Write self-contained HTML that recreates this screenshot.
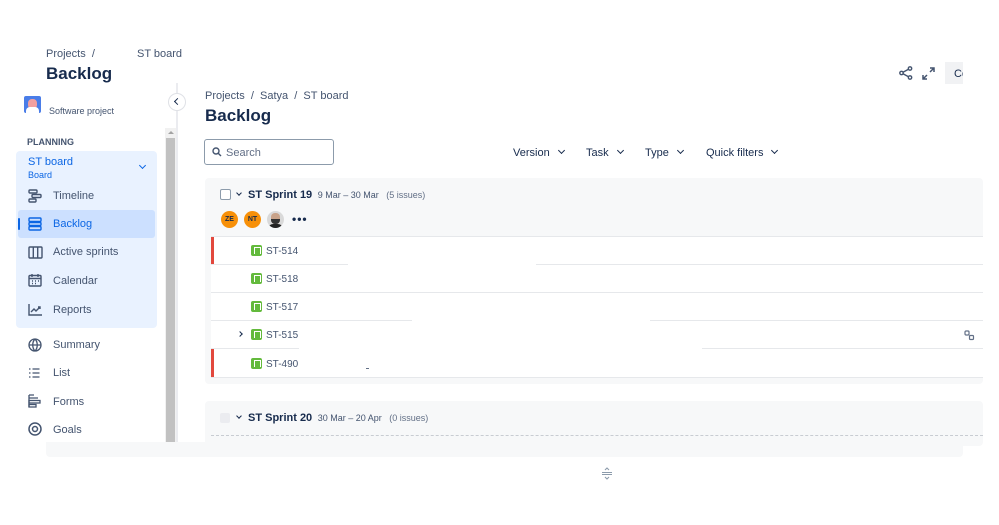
<!DOCTYPE html>
<html><head><meta charset="utf-8"><style>
*{margin:0;padding:0;box-sizing:border-box}
body{width:999px;height:525px;background:#fff;font-family:"Liberation Sans",sans-serif;color:#172b4d;position:relative;overflow:hidden}
.a{position:absolute}
.nav{position:absolute;left:53px;font-size:11px;color:#44546f}
.ic{position:absolute;left:28px}
.row{position:absolute;left:211px;width:772px;height:28px;background:#fff}
.key{position:absolute;left:40px;top:8px;font-size:10px;color:#44546f}
.key i{display:inline-block;width:11px;height:11px;background:#63ba3c;border-radius:2px;vertical-align:-2px;margin-right:4px;position:relative}
.key i:after{content:"";position:absolute;left:3px;top:2px;width:5px;height:6px;border:1.2px solid #fff;border-bottom:none}
.sep{position:absolute;height:1px;background:#e6e8eb}
.flt{position:absolute;top:147px;font-size:11px;color:#172b4d}
.flt:after{content:"";display:inline-block;width:4px;height:4px;border-right:1.5px solid #172b4d;border-bottom:1.5px solid #172b4d;transform:rotate(45deg);margin-left:9px;vertical-align:3px}
</style></head><body>
<div class="a" style="left:46px;top:48px;font-size:11px;color:#44546f">Projects &nbsp;/</div>
<div class="a" style="left:137px;top:48px;font-size:11px;color:#44546f">ST board</div>
<div class="a" style="left:46px;top:64px;font-size:17px;font-weight:bold">Backlog</div>

<div class="a" style="left:24px;top:96px;width:17px;height:17px;background:#4a7de8;border-radius:2px;overflow:hidden"><div style="position:absolute;left:4px;top:3px;width:9px;height:10px;background:#f3a0a0;border-radius:4px"></div><div style="position:absolute;left:2px;top:11px;width:13px;height:6px;background:#fff;border-radius:4px 4px 0 0"></div></div>
<div class="a" style="left:49px;top:106px;font-size:9px;color:#44546f">Software project</div>
<div class="a" style="left:27px;top:137px;font-size:9px;font-weight:bold;color:#44546f">PLANNING</div>
<div class="a" style="left:16px;top:151px;width:141px;height:177px;background:#e9f2ff;border-radius:4px"></div>
<div class="a" style="left:28px;top:156px;font-size:11px;color:#0c66e4">ST board</div>
<div class="a" style="left:28px;top:170px;font-size:9px;color:#0c66e4">Board</div>
<div class="a" style="left:140px;top:163px;width:5px;height:5px;border-right:1.5px solid #0c66e4;border-bottom:1.5px solid #0c66e4;transform:rotate(45deg)"></div>
<div class="a" style="left:18px;top:210px;width:137px;height:28px;background:#cce0ff;border-radius:3px"></div>
<div class="a" style="left:18px;top:218px;width:2px;height:12px;background:#0c66e4;border-radius:1px"></div>
<svg class="ic" style="top:189px" width="14" height="14" viewBox="0 0 14 14" fill="none" stroke="#44546f" stroke-width="1.4"><rect x="1" y="1" width="8" height="3" rx="1"/><rect x="4" y="5.5" width="9" height="3" rx="1"/><rect x="1" y="10" width="7" height="3" rx="1"/></svg>
<div class="nav" style="top:190px">Timeline</div>
<svg class="ic" style="top:217px" width="14" height="14" viewBox="0 0 14 14" fill="none" stroke="#0c66e4" stroke-width="1.4"><rect x="1" y="1" width="12" height="3.5" rx="1"/><rect x="1" y="5.5" width="12" height="3" rx="1"/><rect x="1" y="9.5" width="12" height="3.5" rx="1"/></svg>
<div class="nav" style="top:218px;color:#0c66e4">Backlog</div>
<svg class="ic" style="top:246px" width="15" height="13" viewBox="0 0 15 13" fill="none" stroke="#44546f" stroke-width="1.4"><rect x="1" y="1" width="13" height="11" rx="1"/><path d="M5.3 1v11M9.7 1v11"/></svg>
<div class="nav" style="top:246px">Active sprints</div>
<svg class="ic" style="top:273px" width="14" height="14" viewBox="0 0 14 14" fill="none" stroke="#44546f" stroke-width="1.4"><rect x="1" y="2.5" width="12" height="10.5" rx="1"/><path d="M1 5.5h12M4 1v3M10 1v3M4 8h1M7 8h1M10 8h1M4 10.5h1M7 10.5h1"/></svg>
<div class="nav" style="top:275px">Calendar</div>
<svg class="ic" style="top:303px" width="15" height="13" viewBox="0 0 15 13" fill="none" stroke="#44546f" stroke-width="1.4"><path d="M1 1v11h13M3 9l3-3 2 2 4-4M10 4h2v2"/></svg>
<div class="nav" style="top:304px">Reports</div>
<svg class="ic" style="top:338px" width="14" height="14" viewBox="0 0 14 14" fill="none" stroke="#44546f" stroke-width="1.3"><circle cx="7" cy="7" r="6"/><path d="M1 7h12M7 1c-3 3-3 9 0 12M7 1c3 3 3 9 0 12"/></svg>
<div class="nav" style="top:339px">Summary</div>
<svg class="ic" style="top:367px" width="13" height="12" viewBox="0 0 13 12" fill="none" stroke="#44546f" stroke-width="1.3"><path d="M1 2h1.5M1 6h1.5M1 10h1.5M4.5 2h7M4.5 6h7M4.5 10h7"/></svg>
<div class="nav" style="top:367px">List</div>
<svg class="ic" style="top:394px" width="13" height="14" viewBox="0 0 13 14" fill="none" stroke="#44546f" stroke-width="1.3"><path d="M1 1h5M1 4h9M1 1v12"/><rect x="1" y="6.5" width="11" height="2.5"/><rect x="1" y="10.5" width="7" height="2.5"/></svg>
<div class="nav" style="top:396px">Forms</div>
<svg class="ic" style="top:422px" width="14" height="14" viewBox="0 0 14 14" fill="none" stroke="#44546f" stroke-width="1.5"><circle cx="7" cy="7" r="6"/><circle cx="7" cy="7" r="2.5"/></svg>
<div class="nav" style="top:424px">Goals</div>

<div class="a" style="left:176px;top:83px;width:2px;height:360px;background:#ebecf0"></div>
<div class="a" style="left:168px;top:93px;width:18px;height:18px;border-radius:50%;background:#fff;border:1px solid #dfe1e6"></div>
<div class="a" style="left:175px;top:99px;width:5px;height:5px;border-left:1.5px solid #172b4d;border-bottom:1.5px solid #172b4d;transform:rotate(45deg)"></div>
<div class="a" style="left:165px;top:128px;width:11px;height:314px;background:#f1f1f1"></div>
<div class="a" style="left:166px;top:138px;width:9px;height:304px;background:#c1c1c1"></div>
<div class="a" style="left:168px;top:131px;width:0;height:0;border-left:3px solid transparent;border-right:3px solid transparent;border-bottom:3px solid #a3a3a3"></div>

<div class="a" style="left:205px;top:90px;font-size:11px;color:#44546f">Projects &nbsp;/ &nbsp;Satya &nbsp;/ &nbsp;ST board</div>
<div class="a" style="left:205px;top:106px;font-size:17px;font-weight:bold">Backlog</div>
<div class="a" style="left:204px;top:139px;width:130px;height:26px;border:1.5px solid #8c9bab;border-radius:3px"></div>
<svg class="a" style="left:212px;top:147px" width="10" height="10" viewBox="0 0 10 10" fill="none" stroke="#44546f" stroke-width="1.4"><circle cx="4" cy="4" r="3"/><path d="M6.2 6.2L9 9"/></svg>
<div class="a" style="left:226px;top:147px;font-size:11px;color:#626f86">Search</div>
<div class="flt" style="left:513px">Version</div>
<div class="flt" style="left:586px">Task</div>
<div class="flt" style="left:645px">Type</div>
<div class="flt" style="left:706px">Quick filters</div>

<svg class="a" style="left:899px;top:66px" width="14" height="14" viewBox="0 0 14 14" fill="none" stroke="#44546f" stroke-width="1.4"><circle cx="11" cy="2.5" r="1.7"/><circle cx="2.5" cy="7" r="1.7"/><circle cx="11" cy="11.5" r="1.7"/><path d="M4 6.2L9.5 3.3M4 7.8l5.5 2.9"/></svg>
<svg class="a" style="left:922px;top:67px" width="13" height="13" viewBox="0 0 13 13" fill="none" stroke="#44546f" stroke-width="1.5"><path d="M8 1h4v4M12 1L8 5M5 12H1V8M1 12l4-4"/></svg>
<div class="a" style="left:945px;top:62px;width:18px;height:22px;background:#f1f2f4;font-size:11px;padding:6px 0 0 9px;overflow:hidden;white-space:nowrap">Co</div>

<div class="a" style="left:205px;top:178px;width:778px;height:206px;background:#f7f8f9;border-radius:4px"></div>
<div class="a" style="left:220px;top:189px;width:11px;height:11px;border:1.5px solid #8c9bab;border-radius:2px;background:#fff"></div>
<div class="a" style="left:237px;top:191px;width:4px;height:4px;border-right:1.5px solid #172b4d;border-bottom:1.5px solid #172b4d;transform:rotate(45deg)"></div>
<div class="a" style="left:248px;top:189px;font-size:11px;font-weight:bold">ST Sprint 19 <span style="font-weight:normal;font-size:9px;color:#44546f">&nbsp;9 Mar – 30 Mar &nbsp; <span style="color:#626f86">(5 issues)</span></span></div>
<div class="a" style="left:221px;top:211px;width:17px;height:17px;border-radius:50%;background:#f79009;font-size:7px;font-weight:bold;text-align:center;line-height:17px;color:#172b4d">ZE</div>
<div class="a" style="left:244px;top:211px;width:17px;height:17px;border-radius:50%;background:#f79009;font-size:7px;font-weight:bold;text-align:center;line-height:17px;color:#172b4d">NT</div>
<div class="a" style="left:267px;top:211px;width:17px;height:17px;border-radius:50%;background:#d9d9d9;overflow:hidden"><div style="position:absolute;left:4px;top:2px;width:9px;height:11px;background:#c9a38a;border-radius:4px"></div><div style="position:absolute;left:4px;top:8px;width:9px;height:5px;background:#333;border-radius:0 0 4px 4px"></div><div style="position:absolute;left:1px;top:13px;width:15px;height:6px;background:#222;border-radius:5px 5px 0 0"></div></div>
<div class="a" style="left:292px;top:212px;font-size:12px;font-weight:bold;letter-spacing:1px">•••</div>

<div class="row" style="top:237px"><div class="key"><i></i>ST-514</div></div>
<div class="row" style="top:265px"><div class="key"><i></i>ST-518</div></div>
<div class="row" style="top:293px"><div class="key"><i></i>ST-517</div></div>
<div class="row" style="top:321px"><div class="key"><i></i>ST-515</div><div class="a" style="left:27px;top:11px;width:4px;height:4px;border-right:1.5px solid #172b4d;border-top:1.5px solid #172b4d;transform:rotate(45deg)"></div>
<svg class="a" style="left:753px;top:9px" width="11" height="11" viewBox="0 0 11 11" fill="none" stroke="#626f86" stroke-width="1.2"><rect x="1" y="1" width="4" height="4" rx="1"/><rect x="5.5" y="5.5" width="4" height="4" rx="1"/></svg></div>
<div class="row" style="top:349px;height:28px"><div class="key" style="top:9px"><i></i>ST-490</div><div class="a" style="left:155px;top:19px;width:3px;height:1px;background:#626f86"></div></div>
<div class="a" style="left:211px;top:237px;width:3px;height:27px;background:#e2483d"></div>
<div class="a" style="left:211px;top:349px;width:3px;height:28px;background:#e2483d"></div>
<div class="sep" style="left:211px;top:236px;width:772px"></div>
<div class="sep" style="left:211px;top:264px;width:137px"></div><div class="sep" style="left:536px;top:264px;width:447px"></div>
<div class="sep" style="left:211px;top:292px;width:772px"></div>
<div class="sep" style="left:211px;top:320px;width:201px"></div><div class="sep" style="left:650px;top:320px;width:333px"></div>
<div class="sep" style="left:211px;top:348px;width:88px"></div><div class="sep" style="left:702px;top:348px;width:281px"></div>
<div class="sep" style="left:211px;top:377px;width:772px"></div>

<div class="a" style="left:205px;top:401px;width:778px;height:45px;background:#f7f8f9;border-radius:4px"></div>
<div class="a" style="left:220px;top:413px;width:10px;height:10px;background:#ebecf0;border-radius:2px"></div>
<div class="a" style="left:237px;top:414px;width:4px;height:4px;border-right:1.5px solid #172b4d;border-bottom:1.5px solid #172b4d;transform:rotate(45deg)"></div>
<div class="a" style="left:248px;top:412px;font-size:11px;font-weight:bold">ST Sprint 20 <span style="font-weight:normal;font-size:9px;color:#44546f">&nbsp;30 Mar – 20 Apr &nbsp; <span style="color:#626f86">(0 issues)</span></span></div>
<div class="a" style="left:211px;top:435px;width:772px;border-top:1px dashed #c8ccd2"></div>

<div class="a" style="left:46px;top:442px;width:917px;height:15px;background:#f7f8f9;border-radius:0 0 4px 4px"></div>
<svg class="a" style="left:601px;top:467px" width="12" height="13" viewBox="0 0 12 13" fill="none" stroke="#8c9bab" stroke-width="1.1"><path d="M4 3l2-2 2 2M1 5.5h10M1 7.5h10M4 10l2 2 2-2"/></svg>
</body></html>
